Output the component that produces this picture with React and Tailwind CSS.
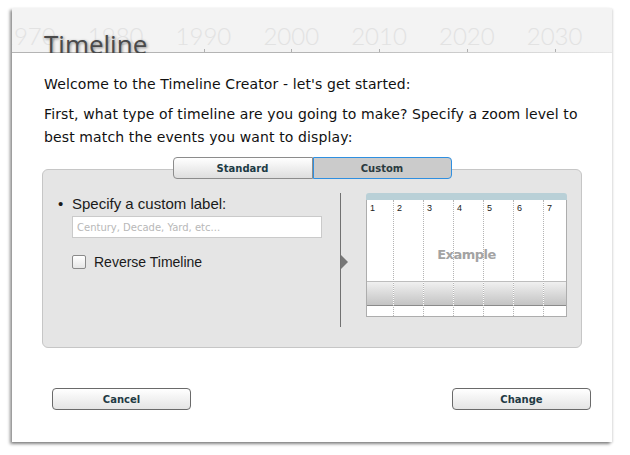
import React from 'react';

const years = [1970, 1980, 1990, 2000, 2010, 2020, 2030];
const columns = [1, 2, 3, 4, 5, 6, 7];

const bodyFont = { fontFamily: '"DejaVu Sans", "Lucida Grande", sans-serif' };
const arialFont = { fontFamily: '"Liberation Sans", Arial, sans-serif' };

const TimelineHeader = () => (
  <div className="relative h-[45px] bg-[#f3f3f3] overflow-hidden">
    {/* decorative year scale behind the title */}
    <div className="absolute top-[16px] left-[-12px] flex" style={{ fontFamily: 'Lato, sans-serif' }}>
      {years.map((y, i) => (
        <div key={y} className="relative w-[87.8px] h-[29px] shrink-0">
          <span className="text-[24px] leading-[24px] font-light text-[#e2e2e2]">{y}</span>
          {i > 1 && <div className="absolute left-[28px] bottom-0 w-px h-[4px] bg-[#b0b0b0]" />}
        </div>
      ))}
    </div>
    <div className="absolute left-0 right-0 bottom-0 h-px bg-gradient-to-r from-[#b4b4b4] via-[#b4b4b4] to-[#e6e6e6]" />
    <h1
      className="absolute left-[32px] top-[23px] z-10 text-[26px] leading-[26px] text-[#4a4a4a] [text-shadow:1px_1px_3px_rgba(0,0,0,0.45)]"
      style={{ fontFamily: '"Open Sans", sans-serif' }}
    >
      Timeline
    </h1>
  </div>
);

const ZoomTabs = () => (
  <div className="relative z-10 flex justify-center" style={bodyFont}>
    <button className="w-[140px] h-[22px] rounded-l-[4px] border border-[#8c8c8c] bg-gradient-to-b from-white to-[#dedede] text-[10px] font-bold text-[#1d3b45]">
      Standard
    </button>
    <button className="w-[139px] h-[22px] rounded-r-[4px] border border-[#2f8fe0] bg-[#cbcbcb] text-[10px] font-bold text-[#2a3a40]">
      Custom
    </button>
  </div>
);

const ExamplePreview = () => (
  <div className="relative ml-[25px] w-[201px] h-[124px] flex flex-col">
    <div className="h-[7px] rounded-t-[3px] bg-[#b9d0d7]" />
    <div className="flex flex-1 border-x border-b border-[#adadad] bg-white">
      {columns.map((n, i) => (
        <div
          key={n}
          className={`flex flex-col ${i === 0 ? 'w-[26px]' : i === 6 ? 'flex-1 border-l border-dotted border-[#b5b5b5]' : 'w-[30px] border-l border-dotted border-[#b5b5b5]'}`}
        >
          <div className="h-[81px] pt-[3px] pl-[3px] text-[9px] leading-[10px] text-[#222]" style={arialFont}>
            {n}
          </div>
          <div className="h-[25px] border-t border-[#bdbdbd] border-b border-b-[#8a8a8a] bg-gradient-to-b from-[#f0f0f0] to-[#c4c4c4]" />
          <div className="flex-1" />
        </div>
      ))}
    </div>
    <div
      className="absolute left-0 right-0 top-[53px] text-center text-[13px] leading-[18px] font-bold tracking-[-0.5px] text-[#a3a3a3]"
      style={bodyFont}
    >
      Example
    </div>
  </div>
);

const CustomPanel = () => (
  <div className="mt-[-10px] h-[179px] rounded-[6px] border border-[#c6c6c6] bg-[#e5e5e5] flex pt-[23px]">
    <div className="w-[297px] pt-[2px]" style={arialFont}>
      <div className="flex items-center h-[18px] pl-[15px] text-[15px] text-[#1a1a1a]">
        <span className="w-[14px]">•</span>
        <span>Specify a custom label:</span>
      </div>
      <input
        placeholder="Century, Decade, Yard, etc..."
        className="mt-[3px] ml-[29px] w-[250px] h-[22px] border border-[#cacaca] bg-white px-[4px] text-[10px] text-[#333] placeholder:text-[#b8b8b8] outline-none"
        style={bodyFont}
      />
      <label className="mt-[15px] ml-[29px] flex items-center h-[18px] gap-[8px] text-[14px] text-[#1a1a1a]">
        <span className="w-[14px] h-[14px] rounded-[2px] border border-[#8a8a8a] bg-gradient-to-b from-white to-[#e6e6e6]" />
        Reverse Timeline
      </label>
    </div>
    <div className="relative w-px h-[134px] bg-[#717171]">
      <div className="absolute left-px top-[62px] w-0 h-0 border-y-[7px] border-y-transparent border-l-[7px] border-l-[#777]" />
    </div>
    <ExamplePreview />
  </div>
);

const DialogButton = ({ children }) => (
  <button
    className="w-[139px] h-[22px] rounded-[4px] border border-[#6a6a6a] bg-gradient-to-b from-white to-[#e4e4e4] text-[10px] font-bold text-[#1f3a44]"
    style={bodyFont}
  >
    {children}
  </button>
);

export default function App() {
  return (
    <div className="w-[630px] h-[455px] bg-white pt-[8px] pl-[12px]">
      <div className="w-[600px] h-[434px] bg-white shadow-[-2px_2px_3px_rgba(0,0,0,0.45),1px_1px_2px_rgba(0,0,0,0.12)] flex flex-col">
        <TimelineHeader />
        <div className="px-[30px] pt-[20px]">
          <div className="pl-[2px] text-[14px] tracking-[0.12px] text-[#111]" style={bodyFont}>
            <p className="leading-[22px]">Welcome to the Timeline Creator - let's get started:</p>
            <p className="mt-[8px] leading-[23px]">
              First, what type of timeline are you going to make? Specify a zoom level to best match the events you want to display:
            </p>
          </div>
          <div className="mt-[8px]">
            <ZoomTabs />
            <CustomPanel />
          </div>
        </div>
        <div className="mt-[40px] flex justify-between pl-[40px] pr-[21px]">
          <DialogButton>Cancel</DialogButton>
          <DialogButton>Change</DialogButton>
        </div>
      </div>
    </div>
  );
}
